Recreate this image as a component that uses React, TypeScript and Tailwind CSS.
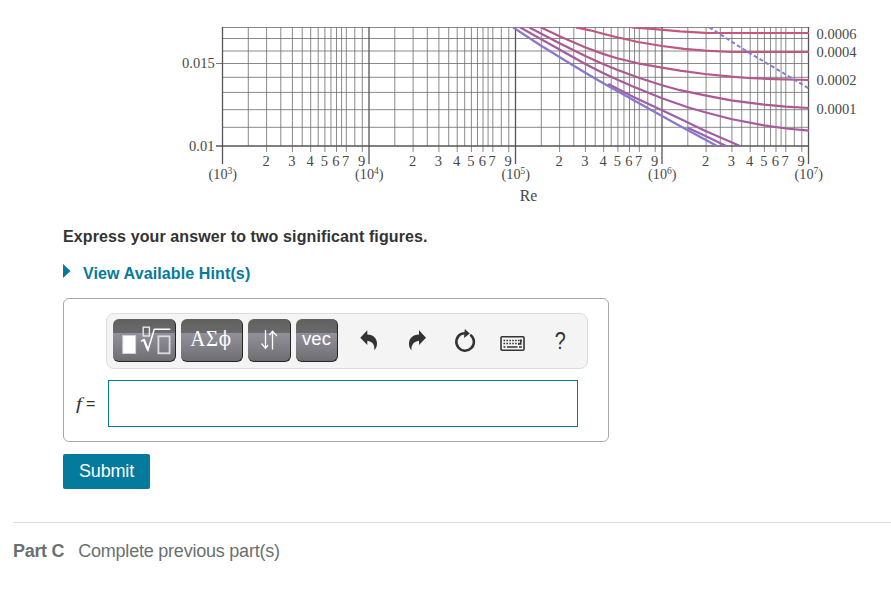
const decades = [
  { x: 222.5, exp: "3" },
  { x: 369, exp: "4" },
  { x: 515.5, exp: "5" },
  { x: 662, exp: "6" },
  { x: 808.5, exp: "7" },
];
const steps = [1.5, 2, 2.5, 3, 3.5, 4, 4.5, 5, 5.5, 6, 6.5, 7, 8, 9];
const ticks = [2, 3, 4, 5, 6, 7, 9];
const rows = [27.5, 38.5, 51, 63.5, 77.3, 92.4, 109.7, 127.3];

const curves = [
  { color: "#c4577c", points: "631.7,27.3 655,29.2 680,31.3 705,32.8 731,33 809,33" },
  { color: "#c0577f", points: "576,27.3 590,30.3 603,33.7 617,37.3 638,42 662,46 684,48.8 705,50.7 731,52 809,52" },
  { color: "#b65889", points: "540.7,27.3 559,36 585,47.3 603,53.9 617,58.3 638,63.3 662,67.7 680,70.7 705,74 731,76.7 748,78 775,79.2 809,80" },
  { color: "#ae5892", points: "529,27.3 559,43 585.3,55.9 603,64 617,69.7 638,77.5 662,85.3 680,90.2 705,95.3 731,100.3 764,104.7 786,106.7 809,108" },
  { color: "#a75b9d", points: "520,27.3 559,49.3 585.3,64 603,73 617,79.5 633,86.5 662,98.3 687.7,107.3 705,112.3 731,119 764,125.3 786,128.5 809,130.7" },
  { color: "#a25ea5", points: "608.3,84 633,96.7 662,110.3 680,118.8 705,130.7 740,146" },
  { color: "#9964b4", points: "687.7,127.7 706,136.3 726,146" },
  { color: "#8778cd", points: "513,27.3 540,45 559,56.7 585.3,72.7 603.3,83.3 633.3,100 662,116 680,126 717,146" },
];

const roughness = [
  { y: 38.5, label: "0.0006" },
  { y: 57, label: "0.0004" },
  { y: 85, label: "0.0002" },
  { y: 114.2, label: "0.0001" },
];

function MoodyChart() {
  return (
    <svg
      viewBox="170 27 700 183"
      className="ml-[170px] block h-[183px] w-[700px] shrink-0 font-['Liberation_Serif',serif]"
      fill="#484848"
      fontSize="14.5"
    >
      <g stroke="#6c6c6c" strokeWidth="0.8">
        {rows.map((y) => (
          <line key={y} x1="222" x2="809" y1={y} y2={y} />
        ))}
        {decades.slice(0, 4).map((d) =>
          steps.map((n) => {
            const x = d.x + Math.log10(n) * 146.5;
            return <line key={`${d.x}-${n}`} x1={x} x2={x} y1="27" y2={ticks.includes(n) ? 152 : 146} />;
          }),
        )}
      </g>
      <g stroke="#555" strokeWidth="1.3">
        {decades.map((d) => (
          <line key={d.exp} x1={d.x} x2={d.x} y1="27" y2="164" />
        ))}
        <line x1="216" x2="809" y1="146" y2="146" />
        <line x1="216" x2="222" y1="63.5" y2="63.5" strokeWidth="0.8" />
      </g>

      <g fill="none" strokeWidth="2.2" strokeLinejoin="round">
        {curves.map((c) => (
          <polyline key={c.points} points={c.points} stroke={c.color} />
        ))}
        <path d="M709.3 27.3 748.3 52.3 777 69.3 809 88.5" stroke="#857bd4" strokeWidth="2" strokeDasharray="4 2.6" />
      </g>

      <text x="182" y="68">0.015</text>
      <text x="189" y="150.5">0.01</text>
      {roughness.map((r) => (
        <text key={r.label} x="816.5" y={r.y}>{r.label}</text>
      ))}
      {decades.slice(0, 4).map((d) =>
        ticks.map((n) => (
          <text key={`${d.x}-${n}`} x={d.x + Math.log10(n) * 146.5 - 0.6} y="166" textAnchor="middle">{n}</text>
        )),
      )}
      {decades.map((d) => (
        <text key={d.exp} x={d.x + 0.3} y="179.3" textAnchor="middle" fontSize="14.2">
          (10<tspan dy="-5" fontSize="9.5">{d.exp}</tspan><tspan dy="5">)</tspan>
        </text>
      ))}
      <text x="519.8" y="201.3" fontSize="15.8">Re</text>
    </svg>
  );
}

const keyClass =
  "flex h-[43px] items-center justify-center rounded-[6px] border-r-[1.5px] border-b-[1.5px] border-[#252525] text-white bg-[linear-gradient(#606060_0,#6a6a6a_14px,#92919b_14px,#6e6e72_100%)]";

function Toolbar() {
  return (
    <div className="flex h-[56px] w-[482px] items-start rounded-[8px] border border-[#dcdcdc] bg-[#f4f4f4] pt-[5px] pl-[6px]">
      <button className={`${keyClass} w-[63px]`}>
        <svg width="63" height="43" viewBox="113 319 63 43" fill="none" stroke="#fff" className="shrink-0">
          <rect x="122.8" y="335.5" width="12.8" height="18" fill="#fff" stroke="#d4d4d8" />
          <rect x="143.2" y="327.2" width="6.2" height="8.8" stroke="#e8e8ea" strokeWidth="1.4" />
          <path d="M141 341.3 143.8 339.5 148 350 154.3 329.3H170.3" strokeWidth="1.5" />
          <path d="M143.8 339.5 148 350" strokeWidth="2.2" />
          <rect x="158.4" y="336.3" width="11.2" height="17" stroke="#dcdce0" strokeWidth="1.8" />
        </svg>
      </button>
      <button className={`${keyClass} ml-[5px] w-[62px] pb-[2px]`}>
        <span className="inline-block scale-x-[0.9] font-['Liberation_Serif',serif] text-[23px] tracking-[0.8px] whitespace-nowrap">
          ΑΣ<span className="font-['DejaVu_Serif',serif] text-[20px]">ϕ</span>
        </span>
      </button>
      <button className={`${keyClass} ml-[5px] w-[43px]`}>
        <svg width="18" height="20" viewBox="0 0 18 20" fill="none" stroke="#fff" strokeWidth="1.3">
          <path d="M5.5 0v18M1.5 13.5 5.5 18.3 8 15M12.5 19.5V1.5M9.5 5 12.5 1.2 17 6" />
        </svg>
      </button>
      <button className={`${keyClass} ml-[5px] w-[42px] pb-[2px] text-[18.5px]`}>vec</button>

      <svg width="230" height="43" viewBox="350 319 230 43" className="ml-[12px]" fill="#333">
        <path d="M360.3 337.7 367.3 330.3V334.5C373.5 334.5 377 338.5 377 343.5 377 346.5 375.8 349 374.3 350.2 375 345.5 373 341.5 367.3 340.7V344.9Z" />
        <path d="M426 337.7 419 330.3V334.5C412.8 334.5 409 338.5 409 343.5 409 346.5 409.8 349 411.5 350.2 411 345.5 413.3 341.5 419 340.7V344.9Z" />
        <path d="M470.2 334.7A8.8 8.8 0 1 1 460.8 334.2Q462.5 333.2 465.5 333.2" fill="none" stroke="#333" strokeWidth="2.5" />
        <path d="M464.8 329 469.8 333.5 464 338Z" />
        <rect x="501" y="336.8" width="23" height="13.5" rx="1" fill="none" stroke="#333" strokeWidth="1.6" />
        <path d="M503.5 340.5H522M503.5 343.5H520" fill="none" stroke="#333" strokeWidth="1.6" strokeDasharray="1.6 1.3" />
        <path d="M503.5 347H505.5M507 347H517.5M519 347H522M520.8 339.5V344H518" fill="none" stroke="#333" strokeWidth="1.5" />
        <text x="560.3" y="348.6" textAnchor="middle" fontSize="23" className="font-['Liberation_Sans',sans-serif]" textLength="11" lengthAdjust="spacingAndGlyphs">?</text>
      </svg>
    </div>
  );
}

export default function App() {
  return (
    <div className="flex h-[596px] w-[891px] flex-col overflow-hidden bg-white pt-[27px] font-['Liberation_Sans',Arial,sans-serif] text-[#333]">
      <MoodyChart />

      <div className="ml-[63px] flex flex-col items-start">
        <p className="mt-[15px] text-[16px] leading-[24px] font-bold tracking-[0.115px] whitespace-nowrap">
          Express your answer to two significant figures.
        </p>
        <a href="#" className="mt-[13px] flex h-[24px] text-[16px] leading-[24px] font-bold tracking-[0.115px] whitespace-nowrap text-[#047a9c]">
          <svg width="8" height="14" viewBox="0 0 8 14" className="mt-[2px] mr-[12px]" fill="#047a9c">
            <path d="M0 0 7.5 7 0 14Z" />
          </svg>
          View Available Hint(s)
        </a>

        <div className="mt-[12px] h-[144px] w-[546px] rounded-[6px] border border-[#a9a9a9] pt-[14px] pl-[42px]">
          <Toolbar />
          <div className="mt-[11px] -ml-[42px] flex items-center">
            <label htmlFor="answer" className="flex w-[44px] items-baseline pl-[13px] text-[16px]">
              <i className="inline-block w-[9px] origin-center scale-x-[1.25] font-['Liberation_Serif',serif] text-[17px]">f</i>
              <span>=</span>
            </label>
            <input id="answer" className="h-[47px] w-[470px] border border-[#047a9c] bg-white px-2 outline-none" />
          </div>
        </div>

        <button className="mt-[12px] h-[35px] w-[87px] rounded-[2px] bg-[#047a9c] text-[18px] leading-[33px] tracking-[-0.15px] text-white">Submit</button>
      </div>

      <div className="mt-[33px] ml-[13px] flex border-t border-[#dcdcdc] pt-[15px] text-[18px] leading-[27px] whitespace-nowrap text-[#6a7070]">
        <h2 className="mr-[14px] font-bold tracking-[-0.3px]">Part C</h2>
        <span className="tracking-[-0.22px]">Complete previous part(s)</span>
      </div>
    </div>
  );
}
